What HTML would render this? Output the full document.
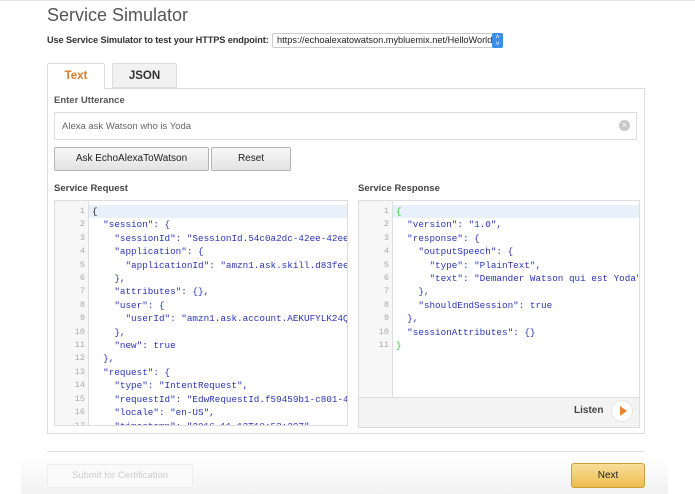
<!DOCTYPE html>
<html><head><meta charset="utf-8"><style>
*{box-sizing:border-box;margin:0;padding:0}
body{width:695px;height:494px;background:#fff;font-family:"Liberation Sans",sans-serif;position:relative;overflow:hidden}
.a{position:absolute}
.code{font-family:"Liberation Mono",monospace;font-size:9.3px;line-height:13.4px;color:#2a35b8;white-space:pre}
.gut{font-family:"Liberation Mono",monospace;font-size:8.5px;line-height:13.4px;color:#aaa;text-align:right;white-space:pre}
.btn{border:1px solid #b5b5b5;border-radius:2px;background:linear-gradient(#f7f7f7,#e3e3e3);font-size:10px;color:#222;text-align:center}
</style></head><body>
<div class="a" style="left:0;top:0;width:695px;height:1px;background:#e6e6e6"></div>
<div class="a" style="left:47px;top:5px;font-size:18px;color:#555">Service Simulator</div>
<div class="a" style="left:47px;top:35px;font-size:9.2px;font-weight:bold;color:#333;letter-spacing:-0.1px">Use Service Simulator to test your HTTPS endpoint:</div>
<div class="a" style="left:272px;top:33px;width:231px;height:15px;border:1px solid #ccc;border-radius:2px;font-size:9.2px;color:#222;padding:1px 0 0 4px;white-space:nowrap;overflow:hidden">https://echoalexatowatson.mybluemix.net/HelloWorld</div>
<div class="a" style="left:492px;top:33px;width:11px;height:15px;background:#3b8eea;border-radius:2px;color:#fff;font-size:7px;text-align:center;line-height:7px;padding-top:1px">˄<br>˅</div>
<div class="a" style="left:47px;top:63px;width:58px;height:26px;border:1px solid #ddd;border-bottom:none;background:#fff;border-radius:2px 2px 0 0;z-index:2;text-align:center;font-size:11.5px;font-weight:bold;color:#e07b26;padding-top:6px">Text</div>
<div class="a" style="left:112px;top:63px;width:65px;height:25px;border:1px solid #ddd;background:#f2f2f2;border-radius:2px 2px 0 0;text-align:center;font-size:11.5px;font-weight:bold;color:#333;padding-top:6px">JSON</div>
<div class="a" style="left:47px;top:88px;width:598px;height:346px;border:1px solid #ddd"></div>
<div class="a" style="left:54px;top:95px;font-size:9.5px;font-weight:bold;color:#555">Enter Utterance</div>
<div class="a" style="left:54px;top:112px;width:583px;height:28px;border:1px solid #ddd;font-size:9.5px;color:#666;padding:8px 0 0 7px">Alexa ask Watson who is Yoda</div>
<div class="a" style="left:619px;top:120px;width:11px;height:11px;border-radius:50%;background:#c8c8c8;color:#fff;font-size:9px;line-height:11px;text-align:center">×</div>
<div class="a btn" style="left:54px;top:147px;width:155px;height:24px;line-height:22px">Ask EchoAlexaToWatson</div>
<div class="a btn" style="left:211px;top:147px;width:80px;height:24px;line-height:22px">Reset</div>
<div class="a" style="left:54px;top:183px;font-size:9.5px;font-weight:bold;color:#444">Service Request</div>
<div class="a" style="left:358px;top:183px;font-size:9.5px;font-weight:bold;color:#444">Service Response</div>
<div class="a" style="left:54px;top:200px;width:294px;height:226px;border:1px solid #ddd;overflow:hidden">
<div class="a" style="left:0;top:0;width:34px;height:226px;background:#f7f7f7;border-right:1px solid #ddd"></div>
<div class="a" style="left:34px;top:4px;width:260px;height:13px;background:#e8f0fb"></div>
<div class="a gut" style="left:0;top:4px;width:30px">1
2
3
4
5
6
7
8
9
10
11
12
13
14
15
16
17</div>
<div class="a code" style="left:37px;top:4px"><span style="color:#222">{</span>
  "session": {
    "sessionId": "SessionId.54c0a2dc-42ee-42ee-9
    "application": {
      "applicationId": "amzn1.ask.skill.d83fee0b
    },
    "attributes": {},
    "user": {
      "userId": "amzn1.ask.account.AEKUFYLK24QRE
    },
    "new": true
  },
  "request": {
    "type": "IntentRequest",
    "requestId": "EdwRequestId.f59459b1-c801-4a6
    "locale": "en-US",
    "timestamp": "2016-11-13T10:53:29Z"</div>
</div>
<div class="a" style="left:358px;top:200px;width:282px;height:228px;border:1px solid #ddd;overflow:hidden">
<div class="a" style="left:0;top:0;width:34px;height:196px;background:#f7f7f7;border-right:1px solid #ddd"></div>
<div class="a" style="left:34px;top:4px;width:248px;height:13px;background:#e8f0fb"></div>
<div class="a gut" style="left:0;top:4px;width:30px">1
2
3
4
5
6
7
8
9
10
11</div>
<div class="a code" style="left:37px;top:4px"><span style="color:#3c3">{</span>
  "version": "1.0",
  "response": {
    "outputSpeech": {
      "type": "PlainText",
      "text": "Demander Watson qui est Yoda"
    },
    "shouldEndSession": true
  },
  "sessionAttributes": {}
<span style="color:#3c3">}</span></div>
<div class="a" style="left:0;top:196px;width:282px;height:32px;background:#f3f3f3;border-top:1px solid #ddd"></div>
<div class="a" style="left:215px;top:204px;font-size:10px;font-weight:bold;color:#444">Listen</div>
<div class="a" style="left:252px;top:199px;width:22px;height:22px;border-radius:50%;background:#fff;border:1px solid #e4e4e4"></div>
<div class="a" style="left:261px;top:205px;width:0;height:0;border-left:7px solid #e8842c;border-top:5px solid transparent;border-bottom:5px solid transparent"></div>
</div>
<div class="a" style="left:47px;top:451px;width:598px;height:1px;background:#e3e3e3"></div>
<div class="a" style="left:21px;top:456px;width:647px;height:38px;background:linear-gradient(#fff,#f2f2f2)"></div>
<div class="a" style="left:47px;top:464px;width:146px;height:24px;border:1px solid #eee;border-radius:2px;background:#fafafa;color:#ccc;font-size:9.5px;text-align:center;line-height:22px">Submit for Certification</div>
<div class="a" style="left:571px;top:463px;width:74px;height:25px;border:1px solid #c9a03a;border-radius:3px;background:linear-gradient(#f8de9a,#eebd4f);font-size:10px;color:#222;text-align:center;line-height:23px">Next</div>
</body></html>
